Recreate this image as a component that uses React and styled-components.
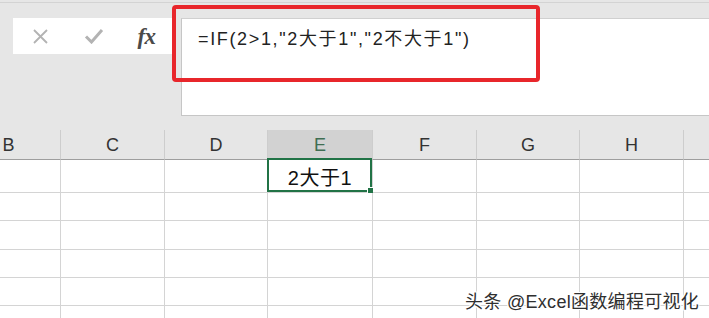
import React from "react";
import styled, { createGlobalStyle } from "styled-components";

const Global = createGlobalStyle`
  html, body { margin: 0; padding: 0; background: #fff; overflow: hidden; }
  body { font-family: "Liberation Sans", "Noto Sans CJK SC", sans-serif; }
  * { box-sizing: border-box; }
`;

const Page = styled.div`
  position: relative;
  width: 709px;
  height: 318px;
  overflow: hidden;
  background: #fff;
`;

const Ribbon = styled.div`
  height: 130px;
  background: #e6e6e6;
`;

const TopEdge = styled.div`
  height: 3px;
  border-bottom: 1px solid #d3d3d3;
`;

const FormulaRow = styled.div`
  display: flex;
  align-items: flex-start;
  margin-top: 15px;
`;

const IconBox = styled.div`
  display: flex;
  align-items: center;
  margin-left: 13px;
  margin-right: 8px;
  padding-left: 1px;
  width: 160px;
  height: 36px;
  background: #fff;
`;

const IconSlot = styled.div`
  width: 54px;
  display: flex;
  justify-content: center;
  align-items: center;
  color: ${(p) => p.$color};
`;

const Fx = styled.span`
  font-family: "Liberation Serif", "DejaVu Serif", serif;
  font-style: italic;
  font-weight: 600;
  font-size: 23px;
  color: #4a4a4a;
  letter-spacing: -0.5px;
  line-height: 1;
`;

const FormulaInput = styled.div`
  flex: 1;
  height: 98px;
  background: #fff;
  border-left: 1px solid #c6c6c6;
  border-top: 1px solid #d0d0d0;
  border-bottom: 1px solid #c6c6c6;
  padding: 8px 0 0 16px;
  font-size: 18px;
  letter-spacing: 1.65px;
  line-height: 24px;
  color: #222;
  white-space: nowrap;
`;

const Grid = styled.div`
  display: grid;
  grid-template-columns: 104px 104px 103px 105px 104px 103px 104px 104px;
  margin-left: -43px;
`;

const HeaderCell = styled.div`
  height: 30px;
  display: flex;
  align-items: center;
  justify-content: center;
  background: ${(p) => (p.$active ? "#d2d2d2" : "#e6e6e6")};
  border-right: 1px solid #cdcdcd;
  border-bottom: 1px solid #9e9e9e;
  color: ${(p) => (p.$active ? "#3f6e52" : "#333")};
  font-size: 18px;
  padding-top: 1px;
`;

const Cell = styled.div`
  position: relative;
  height: ${(p) => p.$h}px;
  border-right: 1px solid #d4d4d4;
  border-bottom: 1px solid #d4d4d4;
  display: flex;
  align-items: center;
  justify-content: center;
  font-size: 20px;
  letter-spacing: 0.6px;
  color: #111;
`;

const Selection = styled.div`
  position: absolute;
  top: -2px;
  left: -1px;
  right: 0;
  bottom: 0;
  border: 2px solid #217346;
  pointer-events: none;
`;

const FillHandle = styled.div`
  position: absolute;
  right: -4px;
  bottom: -4px;
  width: 7px;
  height: 7px;
  background: #217346;
  border: 1px solid #fff;
`;

const Annotation = styled.div`
  position: absolute;
  left: 172px;
  top: 5px;
  width: 368px;
  height: 77px;
  border: 4px solid #e8262b;
  border-radius: 4px;
`;

const Watermark = styled.div`
  position: absolute;
  left: 465px;
  top: 287px;
  font-size: 18px;
  letter-spacing: 0.3px;
  color: #2f2f2f;
  white-space: nowrap;
  text-shadow: 1px 0 0 #fff, -1px 0 0 #fff, 0 1px 0 #fff, 0 -1px 0 #fff,
    1px 1px 0 #fff, -1px -1px 0 #fff, 1px -1px 0 #fff, -1px 1px 0 #fff;
`;

const cols = ["B", "C", "D", "E", "F", "G", "H", ""];
const rowHeights = [33, 28, 29, 28, 28, 28];

export default function App() {
  return (
    <Page>
      <Global />
      <Ribbon>
        <TopEdge />
        <FormulaRow>
          <IconBox>
            <IconSlot $color="#b3b3b3">
              <svg width="17" height="17" viewBox="0 0 17 17">
                <path d="M2 2 L15 15 M15 2 L2 15" stroke="currentColor" strokeWidth="1.8" fill="none" />
              </svg>
            </IconSlot>
            <IconSlot $color="#b3b3b3">
              <svg width="20" height="16" viewBox="0 0 20 16">
                <path d="M2 8.5 L7.5 14 L18 2" stroke="currentColor" strokeWidth="3" fill="none" />
              </svg>
            </IconSlot>
            <IconSlot>
              <Fx>fx</Fx>
            </IconSlot>
          </IconBox>
          <FormulaInput>=IF(2&gt;1,"2大于1","2不大于1")</FormulaInput>
        </FormulaRow>
      </Ribbon>
      <Grid>
        {cols.map((c, i) => (
          <HeaderCell key={i} $active={c === "E"}>
            {c}
          </HeaderCell>
        ))}
        {rowHeights.map((h, r) =>
          cols.map((c, i) => (
            <Cell key={`${r}-${i}`} $h={h}>
              {r === 0 && c === "E" && (
                <>
                  2大于1
                  <Selection>
                    <FillHandle />
                  </Selection>
                </>
              )}
            </Cell>
          ))
        )}
      </Grid>
      <Annotation />
      <Watermark>头条 @Excel函数编程可视化</Watermark>
    </Page>
  );
}
